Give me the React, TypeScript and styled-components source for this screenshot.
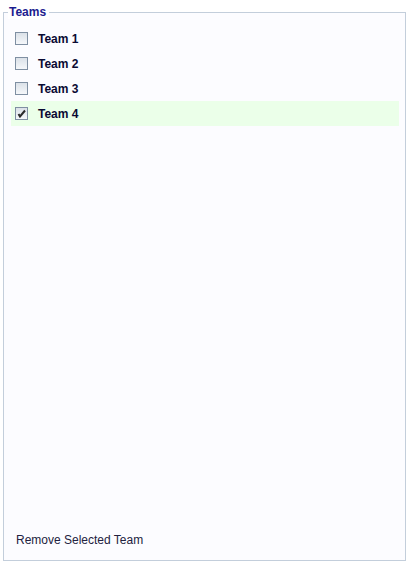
import React, { useState } from "react";
import styled, { createGlobalStyle } from "styled-components";

const Global = createGlobalStyle`
  html, body { margin: 0; padding: 0; background: #ffffff; }
  body { font-family: "Liberation Sans", Arial, sans-serif; }
`;

const Page = styled.div`
  padding: 12px 6px 0 3px;
  width: 403px;
`;

const Panel = styled.div`
  position: relative;
  box-sizing: border-box;
  width: 403px;
  height: 549px;
  border: 1px solid #c3cedb;
  background: #fcfcff;
  display: flex;
  flex-direction: column;
  padding: 13px 6px 0 7px;
`;

const Legend = styled.div`
  position: absolute;
  top: -8px;
  left: 4px;
  padding: 0 3px 0 1px;
  background: #ffffff;
  font-size: 12px;
  font-weight: bold;
  line-height: 14px;
  color: #1c1c8f;
`;

const List = styled.div`
  display: flex;
  flex-direction: column;
`;

const Row = styled.label<{ $selected: boolean }>`
  display: flex;
  align-items: center;
  gap: 10px;
  height: 25px;
  padding-left: 4px;
  background: ${(p) => (p.$selected ? "#ebffe9" : "transparent")};
  cursor: pointer;
`;

const Box = styled.span`
  box-sizing: border-box;
  width: 13px;
  height: 13px;
  border: 1px solid #7f8fa2;
  background: linear-gradient(#dbe1e8, #f5f7fa);
  display: flex;
  align-items: center;
  justify-content: center;
`;

const Label = styled.span`
  font-size: 12px;
  font-weight: bold;
  color: #0a0a33;
`;

const Footer = styled.div`
  margin-top: auto;
  padding: 0 0 13px 5px;
  font-size: 12px;
  color: #222240;
  line-height: 14px;
`;

const Check = () => (
  <svg width="9" height="9" viewBox="0 0 9 9">
    <path d="M1.5 5 L3 7.5 L8 1.5" stroke="#2a2a2a" strokeWidth="2" fill="none" />
  </svg>
);

export default function App() {
  const [selected, setSelected] = useState<number[]>([4]);
  const teams = [1, 2, 3, 4];
  return (
    <>
      <Global />
      <Page>
        <Panel>
          <Legend>Teams</Legend>
          <List>
            {teams.map((t) => {
              const on = selected.includes(t);
              return (
                <Row
                  key={t}
                  $selected={on}
                  onClick={() =>
                    setSelected((s) => (on ? s.filter((x) => x !== t) : [...s, t]))
                  }
                >
                  <Box>{on && <Check />}</Box>
                  <Label>Team {t}</Label>
                </Row>
              );
            })}
          </List>
          <Footer>Remove Selected Team</Footer>
        </Panel>
      </Page>
    </>
  );
}
